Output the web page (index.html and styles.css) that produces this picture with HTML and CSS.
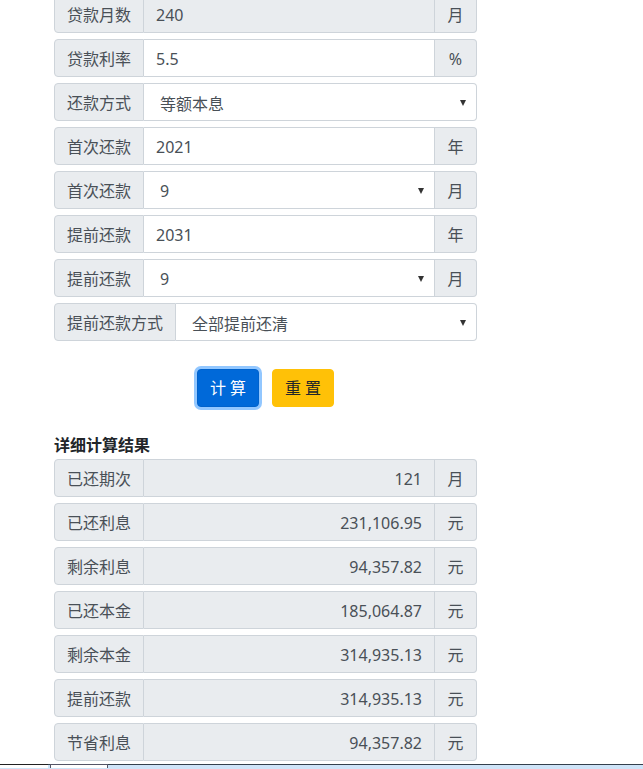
FILE: index.html
```html
<!DOCTYPE html>
<html lang="zh">
<head>
<meta charset="utf-8">
<title>提前还款计算器</title>
<link rel="stylesheet" href="styles.css">
</head>
<body>
<div class="page">
  <form class="calc">
    <div class="group">
      <span class="addon">贷款月数</span>
      <input class="field readonly" type="text" value="240" readonly>
      <span class="addon suffix">月</span>
    </div>
    <div class="group">
      <span class="addon">贷款利率</span>
      <input class="field" type="text" value="5.5">
      <span class="addon suffix">%</span>
    </div>
    <div class="group">
      <span class="addon">还款方式</span>
      <div class="select"><span>等额本息</span><i class="arrow"></i></div>
    </div>
    <div class="group">
      <span class="addon">首次还款</span>
      <input class="field" type="text" value="2021">
      <span class="addon suffix">年</span>
    </div>
    <div class="group">
      <span class="addon">首次还款</span>
      <div class="select"><span>9</span><i class="arrow"></i></div>
      <span class="addon suffix">月</span>
    </div>
    <div class="group">
      <span class="addon">提前还款</span>
      <input class="field" type="text" value="2031">
      <span class="addon suffix">年</span>
    </div>
    <div class="group">
      <span class="addon">提前还款</span>
      <div class="select"><span>9</span><i class="arrow"></i></div>
      <span class="addon suffix">月</span>
    </div>
    <div class="group">
      <span class="addon wide">提前还款方式</span>
      <div class="select"><span>全部提前还清</span><i class="arrow"></i></div>
    </div>

    <div class="actions">
      <button type="button" class="btn btn-primary">计 算</button>
      <button type="button" class="btn btn-warning">重 置</button>
    </div>
  </form>

  <h5 class="result-title">详细计算结果</h5>
  <div class="results">
    <div class="group">
      <span class="addon">已还期次</span>
      <div class="value">121</div>
      <span class="addon suffix">月</span>
    </div>
    <div class="group">
      <span class="addon">已还利息</span>
      <div class="value">231,106.95</div>
      <span class="addon suffix">元</span>
    </div>
    <div class="group">
      <span class="addon">剩余利息</span>
      <div class="value">94,357.82</div>
      <span class="addon suffix">元</span>
    </div>
    <div class="group">
      <span class="addon">已还本金</span>
      <div class="value">185,064.87</div>
      <span class="addon suffix">元</span>
    </div>
    <div class="group">
      <span class="addon">剩余本金</span>
      <div class="value">314,935.13</div>
      <span class="addon suffix">元</span>
    </div>
    <div class="group">
      <span class="addon">提前还款</span>
      <div class="value">314,935.13</div>
      <span class="addon suffix">元</span>
    </div>
    <div class="group">
      <span class="addon">节省利息</span>
      <div class="value">94,357.82</div>
      <span class="addon suffix">元</span>
    </div>
  </div>
</div>
<div class="taskbar"><span class="tab first"></span><span class="tab"></span></div>
</body>
</html>
```

FILE: styles.css
```css
html, body {
  margin: 0;
  padding: 0;
  background: #fff;
  overflow: hidden;
}
body {
  font-family: "Noto Sans", "Noto Sans CJK SC", sans-serif;
  font-size: 16px;
  color: #495057;
}
.page {
  width: 423px;
  margin: -5px 0 0 54px;
}
.calc, .results {
  display: flex;
  flex-direction: column;
  gap: 6px;
}
.group {
  display: flex;
  height: 38px;
  box-sizing: border-box;
}
.addon {
  flex: 0 0 auto;
  box-sizing: border-box;
  width: 90px;
  display: flex;
  align-items: center;
  justify-content: center;
  background: #e9ecef;
  border: 1px solid #ced4da;
  border-radius: 4px 0 0 4px;
  color: #495057;
  font-size: 16px;
  line-height: 1;
  padding-top: 1px;
}
.addon.wide { width: 122px; }
.addon.suffix {
  width: 42px;
  border-left: 0;
  border-radius: 0 4px 4px 0;
}
.field, .select, .value {
  flex: 1 1 auto;
  min-width: 0;
  box-sizing: border-box;
  height: 38px;
  margin: 0;
  border: 1px solid #ced4da;
  border-left: 0;
  background: #fff;
  color: #495057;
  font-family: inherit;
  font-size: 16px;
  padding: 1px 12px 0;
  outline: none;
}
.group .field:last-child,
.group .select:last-child,
.group .value:last-child { border-radius: 0 4px 4px 0; }
.field.readonly { background: #e9ecef; }
.select {
  display: flex;
  align-items: center;
  justify-content: space-between;
  padding: 1px 10px 0 16px;
}
.arrow {
  width: 0;
  height: 0;
  border-left: 3.5px solid transparent;
  border-right: 3.5px solid transparent;
  border-top: 6px solid #333;
  margin-top: 1px;
}
.value {
  display: flex;
  align-items: center;
  justify-content: flex-end;
  background: #e9ecef;
}
.actions {
  display: flex;
  justify-content: center;
  gap: 13px;
  margin-top: 22px;
}
.btn {
  height: 38px;
  box-sizing: border-box;
  border: 1px solid transparent;
  border-radius: 4px;
  padding: 0;
  font-family: inherit;
  font-size: 16px;
  line-height: 1;
  white-space: nowrap;
  letter-spacing: 0;
  cursor: pointer;
}
.btn-primary {
  width: 62px;
  background: #0069d9;
  border-color: #0062cc;
  color: #fff;
  box-shadow: 0 0 0 3px rgba(38, 143, 255, 0.5);
}
.btn-warning {
  width: 62px;
  background: #ffc107;
  border-color: #ffc107;
  color: #212529;
}
.result-title {
  margin: 26px 0 2px;
  font-size: 16px;
  font-weight: 700;
  line-height: 24px;
  color: #212529;
}
.taskbar {
  position: fixed;
  left: 0;
  right: 0;
  bottom: 0;
  height: 4px;
  background: #cfe4f8;
  border-top: 1px solid #34404d;
  display: flex;
}
.tab {
  display: block;
  width: 58px;
  height: 4px;
  background: #fff;
  border-left: 1px solid #556;
  border-right: 1px solid #556;
  margin-top: -1px;
  box-sizing: border-box;
  border-top: 1px solid #556;
}
.tab.first {
  width: 48px;
  background: #fff;
  border: 0;
  border-top: 1px solid #222;
  margin-right: 2px;
}
```
